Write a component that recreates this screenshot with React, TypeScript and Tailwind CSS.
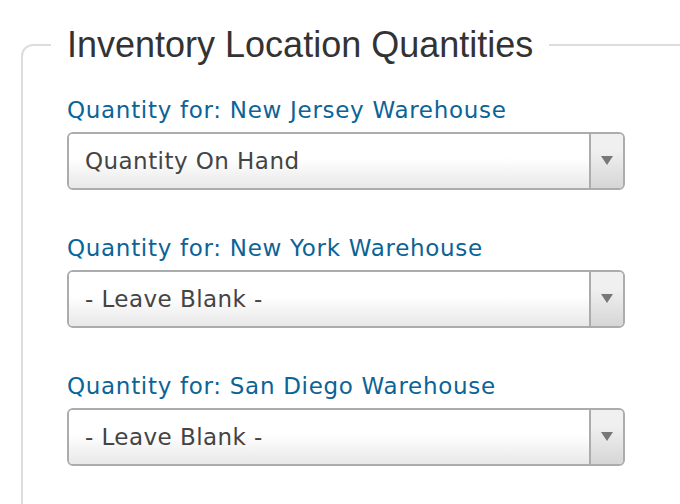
import React from 'react';

const locations = [
  { name: 'New Jersey Warehouse', value: 'Quantity On Hand' },
  { name: 'New York Warehouse', value: '- Leave Blank -' },
  { name: 'San Diego Warehouse', value: '- Leave Blank -' },
];

const SelectBox: React.FC<{ value: string }> = ({ value }) => (
  <div className="flex h-[58px] w-[558px] rounded-[6px] border-2 border-[#acacac] overflow-hidden">
    <div className="flex flex-1 items-center pl-4 bg-gradient-to-b from-white from-45% to-[#e8e8e8] text-[23px] tracking-[0.45px] text-[#444] font-['DejaVu_Sans',sans-serif]">
      {value}
    </div>
    <div className="flex w-[34px] items-center justify-center border-l-2 border-[#acacac] bg-gradient-to-b from-[#f0f0f0] from-30% to-[#d6d6d6]">
      <svg width="12" height="9" viewBox="0 0 12 9" className="mb-[2px]">
        <polygon points="0,0 12,0 6,9" fill="#777" />
      </svg>
    </div>
  </div>
);

export default function App() {
  return (
    <div className="w-[680px] h-[504px] overflow-hidden bg-white">
      <fieldset className="ml-[21px] mt-[27px] w-[720px] h-[520px] border-2 border-[#dddddd] rounded-[12px] pl-[44px]">
        <legend className="-ml-4 px-4 text-[36px] leading-[36px] text-[#333] font-['Liberation_Sans',Arial,sans-serif]">
          Inventory Location Quantities
        </legend>
        <div className="pt-[32px] flex flex-col gap-[43px]">
          {locations.map((loc) => (
            <div key={loc.name} className="flex flex-col gap-[7px]">
              <label className="text-[23px] leading-[30px] tracking-[0.7px] text-[#0b6396] font-['DejaVu_Sans',Verdana,sans-serif]">
                Quantity for: {loc.name}
              </label>
              <SelectBox value={loc.value} />
            </div>
          ))}
        </div>
      </fieldset>
    </div>
  );
}
